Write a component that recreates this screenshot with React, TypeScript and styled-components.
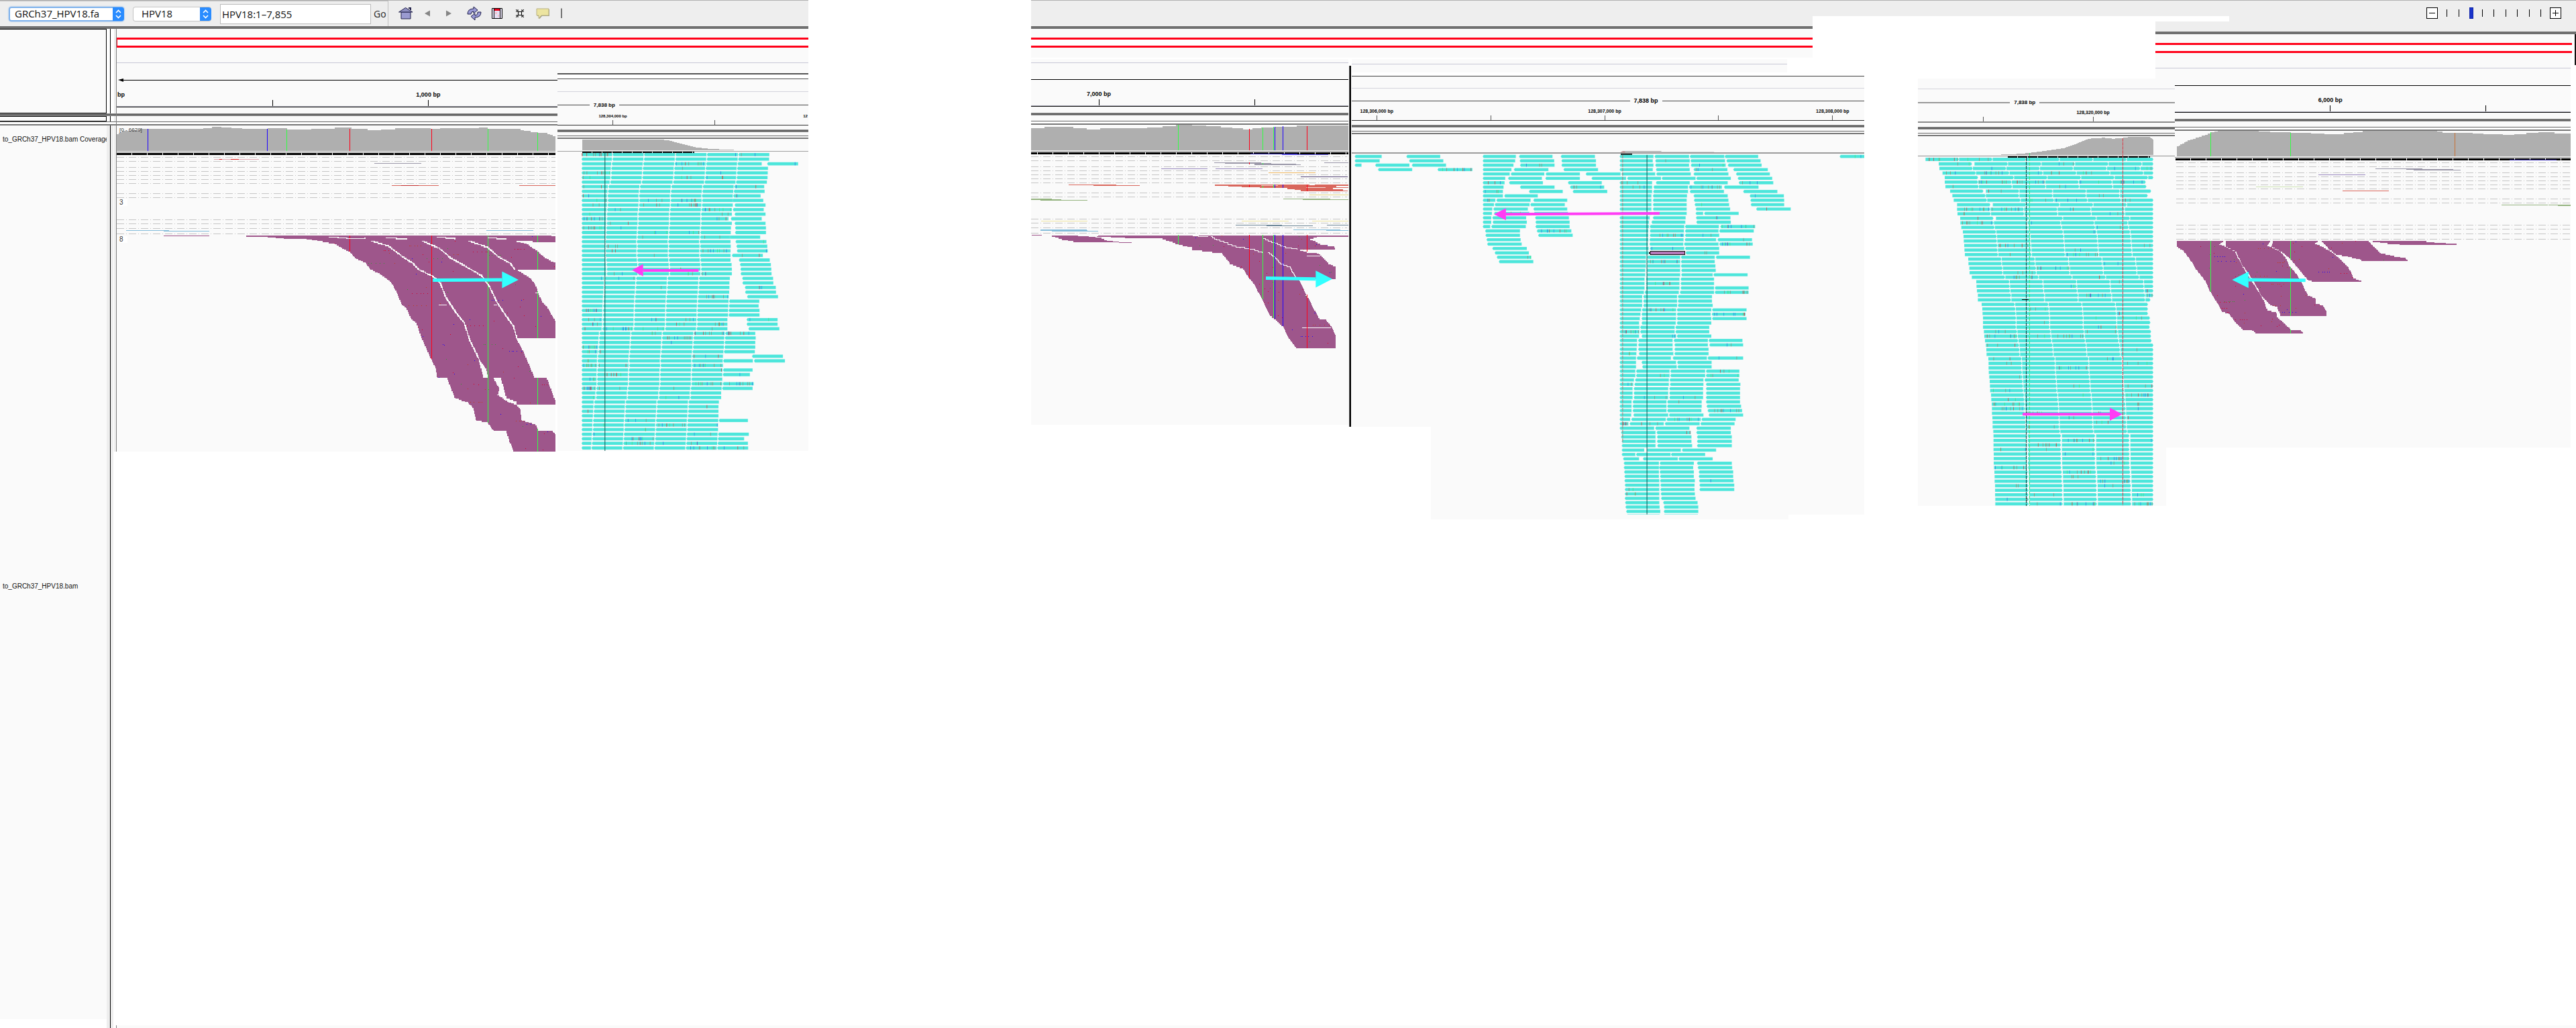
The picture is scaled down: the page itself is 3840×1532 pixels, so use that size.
import React from 'react';
import styled, { createGlobalStyle } from 'styled-components';

const PAPER = '#fafafa';
const CHROME = '#eeeeee';
const READ = '#4ce6db';
const PLUM = '#9e568b';
const RED = '#ff0018';
const LIME = '#33ff44';
const BLUE = '#1c00ff';
const GREY = '#afafaf';

const Global = createGlobalStyle`
  body { margin: 0; background: #fff; font-family: "Liberation Sans", Arial, sans-serif; color: #000; }
  *, *::before, *::after { box-sizing: border-box; }
`;

/* ---------- layout ---------- */

const Page = styled.main`
  display: flex;
  min-height: 100vh;
  background: #fff;
`;
const Col = styled.div<{ $grow: number }>`
  flex: ${p => p.$grow} 1 0;
  min-width: 0;
  display: flex;
  flex-direction: column;
`;
const Row = styled.div<{ $fill?: boolean }>`
  display: flex;
  align-items: ${p => (p.$fill ? 'stretch' : 'flex-start')};
  flex: ${p => (p.$fill ? '1' : 'none')};
`;
const Band = styled.div<{ $h: number; $c?: string }>`
  flex: none;
  height: ${p => p.$h}px;
  background: ${p => p.$c || PAPER};
`;
const Splitter = styled.div`
  flex: none;
  height: 4px;
  background: #636363;
  border: solid #8c8c8c;
  border-width: 1px 0;
`;
const Footer = styled.div<{ $tick?: boolean }>`
  margin-top: auto;
  height: 4px;
  background: ${PAPER};
  border-left: ${p => (p.$tick ? '1px solid #808080' : '0')};
`;
const LeftEdge = styled.div`
  border-left: 1px solid #808080;
`;
const Locus = styled.div<{ $start?: boolean }>`
  flex: none;
  height: 15px;
  background: #fff;
  border: 3px solid ${RED};
  border-right: 0;
  border-left-width: ${p => (p.$start ? 1 : 0)}px;
`;

/* ---------- toolbar ---------- */

const Toolbar = styled.header<{ $h: number; $open?: boolean }>`
  flex: none;
  height: ${p => p.$h}px;
  display: flex;
  align-items: flex-start;
  background: ${CHROME};
  border-top: 1px solid #b2b2b2;
  border-bottom: ${p => (p.$open ? '0' : '4px solid #707070')};
`;
const LocusTools = styled.form`
  display: flex;
  align-items: center;
  height: 38px;
  width: 579px;
  flex: none;
  padding-left: 13px;
  border-top: 1px solid #c0c0c0;
  border-right: 1px solid #c0c0c0;
`;
const SelectBox = styled.div<{ $w: number; $focus?: boolean }>`
  display: flex;
  position: relative;
  width: ${p => p.$w}px;
  height: 22px;
  margin-right: 13px;
  border-radius: 4px;
  background: #fff;
  box-shadow: ${p => (p.$focus ? 'inset 0 0 0 2px #7fb2ec, 0 0 2px #7fb2ec' : 'inset 0 0 0 1px #c4c4c4')};
  svg { position: absolute; right: 0; top: 1px; pointer-events: none; }
`;
const Select = styled.select<{ $pad: number }>`
  appearance: none;
  border: 0;
  outline: 0;
  background: transparent;
  width: 100%;
  padding: 0 18px 1px ${p => p.$pad}px;
  font: 15px "Open Sans", "Noto Sans", sans-serif;
  color: #111;
`;
const Search = styled.input`
  width: 225px;
  height: 30px;
  border: 1px solid #bdbdbd;
  background: #fff;
  padding: 0 0 0 2px;
  font: 15px "Open Sans", "Noto Sans", sans-serif;
  color: #111;
`;
const Go = styled.button`
  border: 0;
  background: none;
  padding: 0 0 0 4px;
  font: 14px "Open Sans", "Noto Sans", sans-serif;
  color: #222;
`;
const Tools = styled.nav`
  display: flex;
  align-items: center;
  height: 38px;
  padding-left: 15px;
  gap: 12px;
`;
const Tool = styled.button`
  width: 22px;
  height: 22px;
  padding: 0;
  border: 0;
  background: none;
  svg { display: block; }
`;
const Notch = styled.div`
  width: 110px;
  height: 8px;
  margin-top: 23px;
  background: #fff;
`;
const Zoom = styled.div`
  display: flex;
  align-items: center;
  margin: 10px 22px 0 auto;
  gap: 13px;
`;
const ZoomButton = styled.button`
  width: 17px;
  height: 17px;
  padding: 2px;
  border: 1px solid #000;
  background: #fff;
  svg { display: block; }
`;
const Scale = styled.div`
  display: flex;
  justify-content: space-between;
  align-items: center;
  position: relative;
  width: 141px;
  height: 17px;
`;
const Mark = styled.i`
  width: 1px;
  height: 11px;
  background: #000;
`;
const Range = styled.input`
  position: absolute;
  inset: 0;
  width: 100%;
  height: 17px;
  margin: 0;
  appearance: none;
  background: transparent;
  &::-webkit-slider-thumb {
    appearance: none;
    width: 6px;
    height: 17px;
    background: #1a34cc;
    border: 1px solid #1024a8;
  }
`;

/* ---------- name gutter ---------- */

const Gutter = styled.aside`
  flex: none;
  width: 173px;
  display: flex;
  flex-direction: column;
`;
const NameCell = styled.div<{ $h: number }>`
  width: 159px;
  height: ${p => p.$h}px;
  background: ${PAPER};
  border: 1px solid #000;
  border-left: 0;
`;
const Grip = styled.div<{ $c: string; $h?: number }>`
  width: 14px;
  display: flex;
  background: linear-gradient(to right, ${p => p.$c} 5px, #000 5px, #000 6px, ${p => p.$c} 6px, ${p => p.$c} 10px, transparent 10px);
`;
const GripPad = styled.div<{ $h: number }>`
  width: 3px;
  margin-left: auto;
  height: ${p => p.$h}px;
  background: ${CHROME};
`;
const Names = styled.div`
  width: 159px;
  display: flex;
  flex-direction: column;
  background: ${PAPER};
  margin-bottom: 13px;
  padding-left: 4px;
`;
const Name = styled.div<{ $h?: number }>`
  ${p => (p.$h ? `height: ${p.$h}px;` : 'flex: 1;')}
  display: flex;
  align-items: center;
  overflow: hidden;
  white-space: nowrap;
  font-size: 10px;
  color: #111;
`;

/* ---------- rulers ---------- */

const RulerRow = styled.div<{ $h: number; $clip?: boolean }>`
  flex: none;
  height: ${p => p.$h}px;
  display: flex;
  align-items: flex-end;
  background: ${PAPER};
  overflow: hidden;
`;
const Spacer = styled.div<{ $grow: number }>`
  flex: ${p => p.$grow} 1 0;
`;
const Tick = styled.div<{ $size: number; $gap: number; $tick: number; $c: string }>`
  width: 1px;
  display: flex;
  flex-direction: column;
  align-items: center;
  white-space: nowrap;
  font: bold ${p => p.$size}px/${p => p.$size}px "Liberation Sans", Arial, sans-serif;
  &::after {
    content: "";
    width: 1px;
    height: ${p => p.$tick}px;
    margin-top: ${p => p.$gap}px;
    background: ${p => p.$c};
  }
`;
const Span = styled.div<{ $size: number }>`
  flex: none;
  height: 13px;
  display: flex;
  align-items: center;
  background: ${PAPER};
  white-space: nowrap;
  font: bold ${p => p.$size}px/13px "Liberation Sans", Arial, sans-serif;
`;
const SpanLine = styled.div<{ $grow: number; $c: string; $h: number }>`
  flex: ${p => p.$grow} 1 0;
  height: ${p => p.$h}px;
  background: ${p => p.$c};
`;
const SpanText = styled.div`
  padding: 0 6px;
`;
const ArrowRow = styled.div`
  display: flex;
  align-items: center;
  height: 5px;
  background: ${PAPER};
  &::before { content: ""; border: solid transparent; border-width: 2px 8px 3px 0; border-right-color: #000; margin-left: 2px; }
  &::after { content: ""; flex: 1; height: 1px; background: #000; }
`;

type TickDef = { at: number; label?: string; plain?: boolean };
const Ruler = ({ from, to, h, size, gap, tick, ticks, color = '#000' }: {
  from: number; to: number; h: number; size: number; gap: number; tick: number; ticks: TickDef[]; color?: string;
}) => (
  <RulerRow $h={h}>
    {ticks.map((t, i) => (
      <React.Fragment key={t.at}>
        <Spacer $grow={t.at - (i ? ticks[i - 1].at : from)} />
        <Tick $size={size} $gap={gap} $tick={tick} $c={t.plain ? 'transparent' : color}>{t.label}</Tick>
      </React.Fragment>
    ))}
    <Spacer $grow={to - ticks[ticks.length - 1].at} />
  </RulerRow>
);
const SpanRow = ({ left, right, size, color, thick = 1 }: { left: number; right: number; size: number; color: string; thick?: number }) => (
  <Span $size={size}>
    <SpanLine $grow={left} $c={color} $h={thick} />
    <SpanText>7,838 bp</SpanText>
    <SpanLine $grow={right} $c={color} $h={thick} />
  </Span>
);
const Splits = ({ first, a, b }: { first: number; a: number; b: number }) => (
  <>
    <Band $h={first} />
    <Splitter />
    <Band $h={a} />
    <Band $h={1} $c="#666" />
    <Band $h={b} $c="#fff" />
    <Band $h={2} $c="#777" />
  </>
);

/* ---------- plots ---------- */

const Frame = styled.div`
  position: relative;
  flex: none;
`;
const Svg = styled.svg`
  display: block;
  width: 100%;
  shape-rendering: crispEdges;
  .px { vector-effect: non-scaling-stroke; fill: none; }
`;
const PlotNote = styled.span<{ $top: number; $plate?: boolean }>`
  position: absolute;
  left: 4px;
  top: ${p => p.$top}px;
  font-size: ${p => (p.$plate ? 10 : 8)}px;
  line-height: 10px;
  padding-right: ${p => (p.$plate ? 6 : 0)}px;
  background: ${p => (p.$plate ? '#fff' : 'transparent')};
  color: #333;
`;

type Unit = { x: number; y: number; sx: number; sy: number };
type Pt = [number, number];
const UnitCtx = React.createContext<Unit>({ x: 0, y: 0, sx: 1, sy: 1 });

const Plot = ({ unit, box, children }: { unit: Unit; box: [number, number, number, number]; children: React.ReactNode }) => {
  const [l, t, r, b] = box;
  const vb = [(l - unit.x) * unit.sx, (t - unit.y) * unit.sy, (r - l) * unit.sx, (b - t) * unit.sy].join(' ');
  return (
    <UnitCtx.Provider value={unit}>
      <Svg viewBox={vb} height={b - t} preserveAspectRatio="none">{children}</Svg>
    </UnitCtx.Provider>
  );
};

const rng = (seed: number) => () => {
  seed = (seed * 1664525 + 1013904223) % 4294967296;
  return seed / 4294967296;
};
const pts = (s: string): Pt[] => s.trim().split(/\s+/).map(p => p.split(',').map(Number) as Pt);
const jag = (s: string, close = true) => {
  const list = pts(s);
  if (close) list.push(list[0]);
  let d = `M${list[0][0]},${list[0][1]}`;
  for (let i = 1; i < list.length; i++) {
    const [ax, ay] = list[i - 1];
    const [bx, by] = list[i];
    const n = Math.max(1, Math.ceil(Math.min(Math.abs(bx - ax) / 3, Math.abs(by - ay) / 5)));
    for (let k = 1; k <= n; k++) {
      d += `H${(ax + ((bx - ax) * k) / n).toFixed(1)}V${(ay + ((by - ay) * k) / n).toFixed(1)}`;
    }
  }
  return d + (close ? 'Z' : '');
};

type VLine = [number, number, number, string];
const VLines = ({ lines, w = 1 }: { lines: VLine[]; w?: number }) => (
  <>{lines.map(([x, a, b, c]) => <path key={`${x}-${a}`} className="px" d={`M${x},${a}V${b}`} stroke={c} strokeWidth={w} />)}</>
);
type HLine = [number, number, number, string];
const HLines = ({ lines }: { lines: HLine[] }) => (
  <>{lines.map(([a, b, y, c], i) => <path key={i} className="px" d={`M${a},${y}H${b}`} stroke={c} strokeWidth={1} />)}</>
);
const Dashes = ({ from, to, ys }: { from: number; to: number; ys: number[] }) => (
  <>{ys.map(y => <path key={y} className="px" d={`M${from},${y}H${to}`} stroke="#c6c6c6" strokeWidth={1} strokeDasharray="11 3 1 3" />)}</>
);
const Blocks = ({ from, to, y, h = 3, offset = 0, on = 22 }: { from: number; to: number; y: number; h?: number; offset?: number; on?: number }) => (
  <path className="px" d={`M${from},${y}H${to}`} stroke="#000" strokeWidth={h} strokeDasharray={`${on} 1`} strokeDashoffset={offset} />
);
const Dots = ({ box, n, seed }: { box: [number, number, number, number]; n: number; seed: number }) => {
  const u = React.useContext(UnitCtx);
  const r = rng(seed);
  const colors = ['#e00020', '#1c00ff', '#2f9a2f', '#c03a20', '#d00030'];
  const out: React.ReactNode[] = [];
  for (let i = 0; i < n; i++) {
    let x = box[0] + r() * (box[2] - box[0]);
    const y = box[1] + r() * (box[3] - box[1]);
    const c = colors[Math.floor(r() * colors.length)];
    const run = r() < 0.15 ? 5 : 1;
    for (let k = 0; k < run; k++) {
      out.push(<rect key={`${i}-${k}`} x={x} y={y} width={u.sx} height={u.sy} fill={c} />);
      x += u.sx * (2 + Math.floor(r() * 6));
    }
  }
  return <>{out}</>;
};
const Arrow = ({ from, neck, tip, half, color, w }: { from: Pt; neck: Pt; tip: Pt; half: number; color: string; w: number }) => (
  <g shapeRendering="auto">
    <path className="px" d={`M${from}L${neck}`} stroke={color} strokeWidth={w} />
    <path d={`M${neck[0]},${tip[1] - half}L${tip}L${neck[0]},${tip[1] + half}Z`} fill={color} />
  </g>
);

type Seg = [number, number];
const Reads = ({ rows, y0, pitch, h, back, seed, rate }: {
  rows: Seg[][]; y0: number; pitch: number; h: number; back?: boolean; seed: number; rate: number;
}) => {
  const u = React.useContext(UnitCtx);
  const r = rng(seed);
  const tip = 1.5 * u.sx;
  const colors = ['#8b8b78', '#1e8ce8', '#3be87c', '#a08060', '#8b8b78', '#2a6ae8', '#d03a3a'];
  let d = '';
  const marks: React.ReactNode[] = [];
  rows.forEach((row, i) => {
    const y = y0 + i * pitch - h / 2;
    row.forEach(([a, b], j) => {
      d += back
        ? `M${a + tip},${y}H${b}V${y + h}H${a + tip}L${a},${y + h / 2}Z`
        : `M${a},${y}H${b - tip}L${b},${y + h / 2}L${b - tip},${y + h}H${a}Z`;
      if (r() < rate) {
        const n = r() < 0.3 ? 8 : 1 + Math.floor(r() * 3);
        for (let k = 0; k < n; k++) {
          const x = a + tip + r() * (b - a - 2 * tip);
          marks.push(<rect key={`${i}-${j}-${k}`} x={x} y={y} width={u.sx * 0.7} height={h} fill={colors[Math.floor(r() * colors.length)]} />);
        }
      }
    });
  });
  return <g shapeRendering="auto"><path d={d} fill={READ} stroke="#c9f6f2" strokeWidth={0.5} />{marks}</g>;
};

/* ---------- viral panel, 5' end ---------- */

const UA: Unit = { x: 160, y: 160, sx: 2.24, sy: 2.9585 };
const bodyA = `464,565 1470,565 1496,572 1496,1517 1358,1517 1345,1475 1333,1426 1290,1424 1270,1388 1232,1378 1222,1325 1205,1300
 1162,1280 1150,1240 1135,1192 1102,1190 1098,1150 1075,1090 1048,1010 1033,950 1015,930 1000,885 983,868 970,822 948,768 910,732
 878,712 862,682 830,665 810,637 760,600 700,585 665,579 590,576 535,570 464,568`;
const holesA = [
  '1366,590 1420,595 1496,598 1496,684 1460,660 1435,630 1400,600 1380,594',
  '1370,716 1496,716 1496,940 1470,880 1455,860 1440,820 1430,780 1412,750',
  '1366,1018 1496,1018 1496,1290 1485,1250 1468,1192 1428,1192 1405,1120 1388,1070',
  '1366,1310 1496,1310 1496,1440 1487,1426 1442,1426 1430,1395 1385,1378 1380,1330',
  '1290,1192 1312,1192 1332,1285 1366,1300 1366,1310 1340,1298 1302,1265 1308,1235',
  '1240,1110 1262,1150 1270,1192 1258,1192',
];
const cracksA = [
  '880,590 940,615 985,660 1020,690 1040,718 1085,745 1110,775 1130,840 1160,900 1190,950 1210,1030 1240,1110',
  '1050,590 1110,625 1145,665 1185,695 1250,745 1275,790 1300,860 1325,910 1355,965 1366,1018',
  '1205,590 1270,620 1305,660 1345,690 1360,716',
  '740,572 800,578 860,574', '930,576 1000,584', '1100,572 1160,582', '1270,576 1330,584', '1107,871 1133,871', '1290,871 1302,871', '1430,818 1442,818',
];
const PlotA = () => (
  <Plot unit={UA} box={[174, 187, 831, 673]}>
    <rect x={31} y={70} width={1480} height={1460} fill={PAPER} />
    <rect x={1496} y={200} width={16} height={1330} fill="#fff" />
    <path d={jag('31,192 31,118 50,105 110,96 230,95 320,92 350,87 380,88 450,94 535,93 600,97 760,90 870,100 960,93 1080,96 1110,91 1240,90 1270,95 1370,96 1390,105 1437,113 1470,118 1496,132 1496,192')} fill={GREY} />
    <VLines lines={[[135, 95, 192, BLUE], [534, 95, 192, BLUE], [598.5, 97, 192, LIME], [810, 95, 192, RED], [1083, 95, 192, RED], [1271, 95, 192, LIME], [1437, 113, 192, LIME]]} />
    <path className="px" d="M31,197H1496" stroke="#8c8c8c" />
    <Blocks from={31} to={1496} y={205} />
    <Dashes from={31} to={1496} ys={[220, 238, 264, 282, 300, 318, 335, 380, 397, 495, 513, 533, 557]} />
    <HLines lines={[
      [356, 506, 229, '#e3a9b4'], [375, 384, 229, '#e02020'], [412, 440, 229, '#e02020'], [892, 1048, 247, '#9a97a8'], [950, 1107, 344, '#d9665c'], [980, 1040, 344, '#c23030'],
      [1375, 1496, 344, '#d9665c'], [63, 206, 542, '#84bdda'], [188, 340, 545, '#84bdda'], [1266, 1422, 542, '#84bdda'], [188, 340, 566, PLUM],
    ]} />
    <clipPath id="clipA"><path d={jag(bodyA)} /></clipPath>
    <path d={jag(bodyA)} fill={PLUM} />
    <g clipPath="url(#clipA)"><Dots box={[600, 566, 1496, 1517]} n={190} seed={11} /></g>
    <VLines lines={[[810, 565, 637, RED], [1083, 565, 1110, RED], [1271, 565, 1390, LIME], [1437, 565, 1517, LIME]]} />
    {holesA.map(s => <path key={s} d={jag(s)} fill={PAPER} />)}
    {cracksA.map(s => <path key={s} className="px" d={jag(s, false)} stroke={PAPER} strokeWidth={1.5} />)}
    <Arrow from={[1087, 762]} neck={[1318, 760]} tip={[1373, 760]} half={37} color="#33ffff" w={5} />
  </Plot>
);

/* ---------- viral panel, 3' end ---------- */

const UC: Unit = { x: 1520, y: 0, sx: 3, sy: 2.3758 };
const bodyC = [
  '54,832 145,838 190,850 240,857 300,858 500,860 445,856 390,850 365,842 310,836 260,834',
  `340,833 1413,833 1470,836 1470,838 1290,838 1330,842 1300,850 1425,851 1310,853 1345,868 1408,876 1410,884 1240,884 1285,895
   1330,897 1350,910 1380,935 1413,948 1413,988 1240,988 1250,995 1285,1050 1325,1110 1340,1130 1370,1135 1395,1160 1413,1190 1413,1232
   1240,1232 1200,1190 1178,1155 1145,1130 1120,1115 1087,1060 1045,1000 1027,983 1000,950 940,930 905,895 770,882 770,875 710,864
   670,852 640,843 470,842 345,836`,
];
const PlotC = () => (
  <Plot unit={UC} box={[1537, 186, 2010, 633]}>
    <rect x={51} y={440} width={1420} height={1070} fill={PAPER} />
    <path d={jag('51,532 51,454 110,449 180,450 300,459 360,454 500,454 640,447 700,442 770,444 900,451 1000,458 1080,451 1140,448 1240,445 1470,444 1470,532')} fill={GREY} />
    <path className="px" d="M51,536H1470" stroke="#8c8c8c" />
    <Blocks from={51} to={1470} y={542} offset={13} />
    <Dashes from={51} to={1464} ys={[555, 569, 590, 604, 619, 632, 647, 683, 697, 775, 790, 806, 825]} />
    <HLines lines={[
      [1032, 1242, 545, '#2a20b0'], [1173, 1380, 547, '#6a60f0'], [870, 1080, 576, '#9a97a8'], [918, 1125, 578, '#9a97a8'], [1050, 1257, 583, '#9a97a8'], [1050, 1236, 581, '#9a97a8'], [1362, 1470, 577, '#9a97a8'],
      [633, 840, 597, '#9a8ac0'], [876, 1085, 597, '#9a8ac0'], [1113, 1323, 612, '#f0b860'], [1257, 1467, 626, '#5a4a78'],
      [219, 432, 654, '#d9665c'], [330, 537, 657, '#d9665c'], [1296, 1470, 690, '#e8d880'],
      [51, 144, 704, '#93b27e'], [51, 186, 706, '#93b27e'], [93, 303, 709, '#93b27e'], [1179, 1389, 704, '#93b27e'], [1266, 1470, 707, '#93b27e'],
      [96, 303, 783, '#efe6a0'], [993, 1203, 783, '#efe6a0'], [1308, 1470, 783, '#efe6a0'], [966, 1173, 797, '#6f8898'], [1104, 1311, 799, '#6f8898'], [1374, 1470, 797, '#6f8898'],
      [93, 300, 814, '#84bdda'], [93, 303, 816, '#84bdda'], [144, 351, 818, '#84bdda'], [1224, 1434, 814, '#84bdda'], [1371, 1470, 816, '#84bdda'],
    ]} />
    <path d="M873,653H1470V657H1416V664H1470V666H1400V669H1446V674H1467V678H1257V673H1230V669H1197V666H1075V664H993V661H933V658H873Z" fill="#d9665c" />
    <HLines lines={[[1080, 1156, 657, '#f2c8c4'], [1280, 1368, 664, '#f2d8d4'], [1296, 1320, 655, PAPER]]} />
    <clipPath id="clipC"><path d={jag(bodyC[0])} /><path d={jag(bodyC[1])} /></clipPath>
    {bodyC.map(s => <path key={s} d={jag(s)} fill={PLUM} />)}
    <g clipPath="url(#clipC)"><Dots box={[620, 832, 1413, 1232]} n={110} seed={5} /></g>
    {['855,838 880,850 930,865 985,880', '985,875 1050,888 1085,895', '1085,845 1140,862 1190,878 1240,884', '1110,895 1140,912 1165,935 1210,950 1235,985', '775,835 800,838 840,836', '300,836 350,837', '1263,1160 1392,1160', '1285,906 1345,906', '1285,891 1293,891', '1278,1046 1290,1046'].map(s => (
      <path key={s} className="px" d={jag(s, false)} stroke={PAPER} strokeWidth={1} />
    ))}
    <VLines lines={[
      [709.5, 442, 532, LIME], [709.5, 832, 865, LIME], [1027, 456, 532, RED], [1027, 576, 582, RED], [1027, 654, 662, RED], [1027, 832, 983, RED],
      [1087.5, 451, 532, LIME], [1087.5, 578, 583, LIME], [1087.5, 658, 665, LIME], [1087.5, 832, 1060, LIME], [1135.5, 450, 532, LIME], [1135.5, 654, 665, LIME], [1135.5, 832, 1127, LIME],
      [1141.5, 449, 532, BLUE], [1141.5, 654, 665, BLUE], [1141.5, 832, 1128, BLUE], [1177.5, 447, 532, BLUE], [1177.5, 654, 665, BLUE], [1177.5, 832, 1155, BLUE],
      [1285.5, 447, 532, RED], [1285.5, 654, 677, RED], [1285.5, 832, 892, RED], [1285.5, 1042, 1232, RED],
    ]} />
    <Arrow from={[1101, 985]} neck={[1324, 988]} tip={[1398, 988]} half={30} color="#33ffff" w={5} />
  </Plot>
);

/* ---------- viral panel, 6 kb ---------- */

const UF: Unit = { x: 3200, y: 0, sx: 2.45, sy: 3 };
const bodyF = [
  '110,1077 285,1077 265,1095 285,1103 320,1125 340,1170 360,1215 385,1262 405,1300 425,1340 440,1390 472,1400 475,1420 495,1440 525,1475 558,1477 572,1490 403,1490 385,1475 355,1475 325,1440 300,1400 275,1390 262,1360 234,1305 215,1255 180,1200 160,1160 135,1120 110,1100',
  '290,1077 455,1077 440,1100 485,1125 505,1150 520,1190 545,1225 565,1265 588,1322 615,1335 617,1360 645,1370 655,1390 657,1412 490,1412 478,1372 450,1360 420,1320 400,1275 378,1230 348,1180 328,1125 290,1100',
  '460,1077 630,1077 615,1092 640,1105 670,1125 705,1160 735,1195 755,1245 783,1259 613,1259 590,1250 575,1230 545,1185 520,1150 495,1125 455,1098',
  '640,1077 808,1077 825,1100 855,1135 905,1148 945,1158 953,1166 790,1166 780,1158 735,1145 690,1135 665,1110',
  '825,1077 995,1077 1050,1086 1133,1093 1133,1095 965,1095 880,1087',
];
const PlotF = () => (
  <Plot unit={UF} box={[3242, 195, 3832, 667]}>
    <rect x={100} y={580} width={1460} height={1430} fill={PAPER} />
    <path d={jag('110,699 110,655 150,628 190,612 234,592 260,585 370,585 450,592 526,593 600,596 650,599 720,594 790,585 1040,585 1080,593 1190,596 1230,601 1300,603 1430,591 1548,600 1548,699')} fill={GREY} />
    <VLines lines={[[234.5, 592, 699, LIME], [525.5, 594, 699, LIME], [1126, 594, 699, '#c87033']]} />
    <path className="px" d="M104,704H1548" stroke="#8c8c8c" />
    <Blocks from={105} to={1548} y={712.5} />
    <Dashes from={108} to={1548} ys={[727, 745, 772, 790, 808, 826, 844, 889, 907, 1006, 1024, 1045, 1069]} />
    <HLines lines={[
      [1325, 1497, 715, '#3a30b8'], [835, 1007, 754, '#9a97a8'], [948, 1120, 757, '#9a97a8'], [975, 1146, 760, '#9a97a8'], [627, 798, 781, '#9a8ac0'], [399, 571, 835, '#cfe3b4'],
      [715, 884, 853, '#d9665c'], [1296, 1465, 916, '#93b27e'], [1468, 1548, 916, '#93b27e'], [1502, 1548, 919, '#93b27e'],
    ]} />
    <clipPath id="clipF">{bodyF.map(s => <path key={s} d={jag(s)} />)}</clipPath>
    {bodyF.map(s => <path key={s} d={jag(s)} fill={PLUM} />)}
    <g clipPath="url(#clipF)">
      <Dots box={[120, 1077, 1000, 1490]} n={150} seed={23} />
      <VLines lines={[[234.5, 1077, 1305, LIME], [525.5, 1077, 1490, LIME]]} />
    </g>
    <Arrow from={[580, 1253]} neck={[372, 1251]} tip={[312, 1251]} half={37} color="#33ffff" w={5} />
  </Plot>
);

/* ---------- host panel, chr8:128,304,000 ---------- */

const UB: Unit = { x: 800, y: 80, sx: 3, sy: 2.6133 };
const firstB = [338, 337, 334, 332, 331, 330, 327, 319, 317, 315, 316, 315, 313, 311, 311, 311, 309, 308, 307, 305, 307, 306, 306, 308, 310, 311, 311, 302, 301, 300, 299, 297, 296, 295, 294, 294, 293, 293, 291, 279, 277, 276, 275, 273, 271, 270, 271, 269, 268, 268, 268, 265, 263, 263, 255, 254, 253, 252, 250, 249, 249, 247, 246, 245, 243, 242];
const endB = [1044, 1046, 1009, 1041, 1041, 1042, 1034, 1020, 1024, 1004, 1016, 1026, 1018, 1026, 1009, 1026, 1028, 1028, 1002, 1030, 1034, 1036, 1014, 1045, 1050, 1052, 1053, 1060, 1061, 1072, 1073, 1082, 998, 995, 999, 1000, 1080, 1080, 1088, 980, 986, 980, 986, 986, 1104, 1113, 837, 968, 956, 835, 973, 968, 827, 827, 817, 815, 815, 815, 947, 817, 820, 951, 930, 947, 950, 950];
const solidB: Record<number, number> = { 10: 882, 11: 882, 12: 875, 13: 875, 14: 860, 15: 878, 16: 871, 17: 870, 18: 870, 19: 870, 20: 870, 21: 869, 22: 869, 23: 869, 24: 878, 25: 878, 26: 878, 27: 866, 28: 864, 29: 866, 30: 863, 31: 861, 36: 855, 37: 855, 38: 855, 44: 837, 45: 969 };
const rowsB: Seg[][] = firstB.map((f, i) => {
  const stop = solidB[i] || endB[i];
  const row: Seg[] = [[201, f]];
  for (let x = f + 2; x < stop - 8; x += 141) row.push([x, Math.min(x + 139, stop)]);
  if (solidB[i]) row.push([endB[i] - 139, endB[i]]);
  if (i === 2) row.push([1033, 1172]);
  return row;
});
const PlotB = () => (
  <Plot unit={UB} box={[831, 207, 1206, 672]}>
    <rect x={93} y={300} width={1125} height={1247} fill={PAPER} />
    <path d="M205,334H540L590,337 640,349 715,365 780,371 885,375V377H205Z" fill={GREY} />
    <path className="px" d="M93,380H1218" stroke="#a0a0a0" strokeWidth={1.5} />
    <Blocks from={205} to={708} y={384} h={2} on={14} />
    <Reads rows={rowsB} y0={393} pitch={17.85} h={12.5} back seed={42} rate={0.3} />
    <VLines lines={[[204, 387, 399, '#d03a3a']]} />
    <path className="px" d="M306,386V1547" stroke="#0a5a54" strokeWidth={1} />
    <Arrow from={[726, 844]} neck={[477, 844]} tip={[427, 843]} half={24} color="#ff3cf5" w={4} />
  </Plot>
);

/* ---------- host panel, chr8:128,307,000 ---------- */

const UD: Unit = { x: 2000, y: 80, sx: 1.96, sy: 2.24 };
const rowsD: Seg[][] = `38-117 189-288 412-509 518-616 640-740 812-911 914-1015 1017-1118 1119-1217 1455-1531
38-111 197-297 412-507 520-621 642-743 812-909 916-1017 1019-1120 1124-1224
38-58 98-198 205-305 412-502 521-622 642-743 812-911 916-1015 1020-1122 1128-1227
106-206 280-382 412-496 503-604 648-749 812-909 918-1017 1028-1127 1144-1245
412-491 494-592 596-696 713-815 817-916 919-1020 1028-1130 1152-1251
412-478 486-585 595-696 730-831 834-933 935-1034 1036-1137 1157-1258
412-476 489-588 661-760 812-907 918-1017 1028-1128 1160-1261
412-473 521-622 667-767 812-907 911-1012 1014-1111 1117-1218
412-471 547-646 675-776 812-907 910-1012 1017-1117 1173-1273
412-471 475-573 812-905 909-1009 1028-1128 1192-1292
412-449 452-552 560-659 812-905 909-1008 1029-1130 1194-1293
412-445 447-549 551-652 812-905 909-1008 1031-1132 1195-1293
412-440 443-544 560-659 812-905 909-1008 1034-1135 1211-1312
412-439 445-548 561-661 812-905 909-1008 1034-1056 1059-1160
412-437 440-539 565-664 812-900 909-1005 1035-1136
412-437 441-541 566-666 812-898 905-1004 1036-1137
412-434 437-538 566-666 812-898 900-1001 1003-1102 1106-1208
419-521 570-671 812-896 900-1000 1003-1101 1103-1204
420-521 574-675 812-896 900-1000 1003-1103
423-523 812-896 899-999 1002-1094 1098-1199
425-526 812-895 899-998 1000-1101 1103-1201
440-541 812-897 900-1001 1003-1103
447-547 812-897 1005-1103
453-554 812-889 892-989 991-1090 1093-1193
459-560 812-889 892-989 991-1090
812-889 892-989 991-1092
812-887 891-989 992-1093
812-887 891-989 992-1084 1086-1186
812-885 889-987 990-1088
812-885 889-987 990-1088
812-885 889-987 990-1088 1090-1189
812-883 885-985 988-1088 1090-1189
812-878 881-980 982-1082
812-878 881-980 982-1082
812-878 881-980 982-1084
812-875 877-977 979-1080 1082-1183
812-873 876-977 979-1078 1081-1180
812-871 876-977 979-1080 1082-1183
812-869 876-976 979-1080
812-870 872-973 975-1074
812-870 872-973 975-1074
812-869 876-977 979-1080
812-863 866-967 970-1070 1072-1171
812-863 866-967 972-1070 1074-1173
812-862 866-967 972-1072
812-861 868-969 972-1072
812-860 862-962 967-1067 1069-1173
812-860 876-977 980-1081
812-860 878-979 981-1081
812-858 860-958 960-1062 1064-1162
812-858 860-958 960-1062 1064-1162
812-854 857-956 958-1057 1060-1160
812-852 855-956 959-1057 1064-1165
812-850 853-954 957-1056 1064-1164
812-850 853-954 957-1056 1064-1164
812-850 853-954 957-1056 1064-1164
812-847 850-949 951-1052 1064-1164
812-847 850-949 951-1052 1066-1167
812-847 850-949 951-1051 1069-1170
812-846 852-954 956-1057 1072-1173
812-843 846-947 949-1049 1051-1151
812-838 841-941 944-1046 1048-1148
812-913 916-1016 1036-1137
816-917 920-1020 1036-1137
816-917 921-1022 1038-1140
818-917 921-1022 1038-1140
818-917 922-1024 1038-1140
818-884 891-991 994-1094
818-858 860-961 962-1062
822-869 880-982 984-1084
824-927 929-1029 1038-1140
824-927 927-1027 1040-1141
825-927 929-1029 1043-1144
826-927 930-1029 1043-1144
826-928 930-1032 1044-1145
827-928 931-1031 1045-1147
827-928 931-1031 1045-1147
827-928 932-1032
827-928 933-1034
828-928 939-1040
829-929 941-1042
831-931 941-1042`.split('\n').map(l => l.trim().split(' ').map(s => s.split('-').map(Number) as Seg));
const PlotD = () => (
  <Plot unit={UD} box={[2015, 200, 2779, 774]}>
    <rect x={29} y={262} width={1500} height={984} fill={PAPER} />
    <rect x={261} y={1240} width={1268} height={299} fill={PAPER} />
    <rect x={261} y={1500} width={1044} height={60} fill={PAPER} />
    <HLines lines={[[820, 934, 326, '#a8a8a8'], [820, 1088, 329, '#b8b8b8'], [816, 828, 328, '#d08080']]} />
    <path className="px" d="M29,332H1529" stroke="#9c9c9c" strokeWidth={1.5} />
    <path className="px" d="M815,336H848" stroke="#000" strokeWidth={2} />
    <Reads rows={rowsD} y0={343} pitch={14.63} h={10.4} back seed={77} rate={0.16} />
    <path d="M834,1538H930M942,1538H1040" stroke={READ} />
    <path className="px" d="M821,338V1300" stroke="#b07a74" strokeWidth={1} strokeDasharray="5 1.5" />
    <path className="px" d="M892,338V1538" stroke="#0a5a54" strokeWidth={1} />
    <path d="M903,660H1003V671H903L899,665.5Z" fill="#b478b8" stroke="#111" strokeWidth={2.5} />
    <Arrow from={[929, 533]} neck={[480, 536]} tip={[445, 536]} half={20} color="#ff3cf5" w={4} />
  </Plot>
);

/* ---------- host panel, chr8:128,320,000 ---------- */

const UE: Unit = { x: 2840, y: 80, sx: 3, sy: 2.2725 };
const leftE = [91, 150, 153, 167, 177, 177, 180, 201, 211, 217, 232, 232, 234, 246, 247, 251, 258, 261, 262, 264, 265, 267, 282, 283, 287, 288, 298, 318, 319, 321, 325, 325, 342, 345, 346, 348, 348, 348, 352, 354, 357, 361, 363, 364, 372, 373, 373, 374, 376, 378, 379, 380, 384, 385, 387, 388, 388, 390, 391, 391, 394, 395, 395, 395, 395, 396, 396, 396, 397, 399, 400, 400, 402, 402, 402, 403, 403];
const endE: Record<number, number> = { 5: 1082, 6: 1084, 7: 1100, 8: 1085, 31: 1097, 32: 1086, 33: 1086, 34: 1086, 35: 1095, 36: 1097, 37: 1094, 38: 1100, 39: 1100, 40: 1102 };
const rowsE: Seg[][] = leftE.map((l, i) => {
  const stop = endE[i] || 1110;
  const row: Seg[] = [];
  const step = i > 60 ? 153 : 150;
  for (let x = l, k = 0; x < stop - 12; k++) {
    const e = Math.min(x + (k === 0 && i > 60 ? 150 : 149), stop);
    row.push([x, e]);
    x += step;
    if (k === 0 && i >= 1 && i <= 15 && i % 3 === 1) x += 10;
  }
  return row;
});
const PlotE = () => (
  <Plot unit={UE} box={[2859, 204, 3242, 755]}>
    <rect x={57} y={270} width={1149} height={1064} fill={PAPER} />
    <rect x={57} y={1330} width={1109} height={202} fill={PAPER} />
    <path d="M402,343L520,339 600,332 710,320 760,307 810,291 840,286 890,285 930,288 980,285 1020,280 1085,278 1109,290V344H402Z" fill={GREY} />
    <path className="px" d="M57,346H1206" stroke="#8c8c8c" strokeWidth={1.5} />
    <Blocks from={460} to={1094} y={351} h={2} on={14} />
    <Reads rows={rowsE} y0={358} pitch={15.35} h={11} seed={9} rate={0.26} />
    <path className="px" d="M556,336V1532" stroke="#3be87c" strokeWidth={1} strokeDasharray="5 2" />
    <path className="px" d="M541,352V1532" stroke="#143c3a" strokeWidth={1} strokeDasharray="5 1" />
    <path className="px" d="M973,286V1530" stroke="#d8404c" strokeWidth={1} strokeDasharray="5 1" />
    <path className="px" d="M522,833H552" stroke="#000" strokeWidth={1} />
    <Arrow from={[525, 1221]} neck={[915, 1221]} tip={[971, 1221]} half={22} color="#ff3cf5" w={4} />
  </Plot>
);

/* ---------- icons ---------- */

const Caret = () => (
  <svg width="17" height="20" viewBox="0 0 17 20" aria-hidden>
    <path d="M0 0H13Q17 0 17 4V16Q17 20 13 20H0Z" fill="#2a8cff" />
    <path d="M5 8L8.500 4.500L12 8M5 12L8.500 15.500L12 12" fill="none" stroke="#fff" strokeWidth="1.6" />
  </svg>
);
const icons: { label: string; art: React.ReactNode }[] = [
  { label: 'Home', art: <><path d="M4 9H18V19H4Z" fill="#9a9ad0" stroke="#22224a" /><path d="M.5 9L10.500 2.500L21 9Z" fill="#8e8ec0" stroke="#22224a" /><path d="M15 3H18V6" fill="none" stroke="#22224a" strokeWidth="2" /></> },
  { label: 'Back', art: <path d="M13 6.500V15.500L5 11Z" fill="#858585" /> },
  { label: 'Forward', art: <path d="M3 6.500V15.500L11 11Z" fill="#858585" /> },
  { label: 'Refresh', art: <g fill="#9a9ad6" stroke="#1c1c48" strokeWidth="1"><path d="M1 12Q1 4 10 4V1L16 6L10 11V8Q6 8 6 12Z" /><path d="M21 9Q21 17 12 17V21L6 15.500L12 11V14Q16 14 16 9Z" /></g> },
  { label: 'Region', art: <><path d="M3.500 3.500H18.500V18.500H3.500Z" fill="#e6e0f4" stroke="#000" /><path d="M6.500 3V19M15.500 3V19" stroke="#000" /><path d="M7 4H15V7H7Z" fill="#e8001c" /><path d="M8 9H11V12H8ZM12 13H14V16H12Z" fill="#f4c4cc" /></> },
  { label: 'Shrink', art: <g stroke="#000" fill="none"><path d="M8.500 8.500H13.500V13.500H8.500Z" /><path d="M5 5L8.500 8.500M17 5L13.500 8.500M5 17L8.500 13.500M17 17L13.500 13.500M5 8H8V5M17 8H14V5M5 14H8V17M17 14H14V17" /></g> },
  { label: 'Details', art: <><path d="M3 5H21V15H10L6 19.500V15H3Z" fill="#a0a090" /><path d="M2 4H20V14H9L5 18.500V14H2Z" fill="#ece4a0" stroke="#b8b080" /></> },
  { label: 'Ruler', art: <path d="M5 3.500V18" stroke="#777" strokeWidth="2" /> },
];

const LeftWindow = () => (
  <Col $grow={1205}>
    <Toolbar $h={43}>
      <LocusTools onSubmit={e => e.preventDefault()}>
        <SelectBox $w={172} $focus>
          <Select $pad={9} aria-label="Genome"><option>GRCh37_HPV18.fa</option></Select>
          <Caret />
        </SelectBox>
        <SelectBox $w={117}>
          <Select $pad={13} aria-label="Chromosome"><option>HPV18</option></Select>
          <Caret />
        </SelectBox>
        <Search aria-label="Locus" defaultValue="HPV18:1–7,855" />
        <Go type="submit">Go</Go>
      </LocusTools>
      <Tools>
        {icons.map(i => (
          <Tool key={i.label} type="button" aria-label={i.label}>
            <svg width="22" height="22" viewBox="0 0 22 22">{i.art}</svg>
          </Tool>
        ))}
      </Tools>
    </Toolbar>
    <Row $fill>
      <Gutter>
        <Row><NameCell $h={126} /><Grip $c="#fff"><GripPad $h={126} /></Grip></Row>
        <Splitter />
        <Row><NameCell $h={8} /><Grip $c="#fff"><GripPad $h={8} /></Grip></Row>
        <Band $h={1} $c="#666" />
        <Band $h={3} $c="#fff" />
        <Band $h={2} $c="#777" />
        <Row $fill>
          <Names>
            <Name $h={40}>to_GRCh37_HPV18.bam Coverage</Name>
            <Name>to_GRCh37_HPV18.bam</Name>
          </Names>
          <Grip $c={CHROME}><GripPad $h={486} /></Grip>
        </Row>
      </Gutter>
      <Col $grow={1}>
        <LeftEdge>
          <Band $h={13} />
          <Locus $start />
          <Band $h={22} />
          <Band $h={1} $c="#c8c8d6" />
          <Band $h={13} />
        </LeftEdge>
        <Row>
          <Col $grow={658}>
            <LeftEdge>
              <Band $h={10} />
              <ArrowRow />
              <Ruler from={174} to={831} h={36} size={9} gap={3} tick={9} ticks={[{ at: 180, label: 'bp', plain: true }, { at: 406 }, { at: 638, label: '1,000 bp' }]} />
              <Band $h={1} $c="#b8b8c4" />
              <Band $h={1} $c="#000" />
              <Splits first={9} a={8} b={3} />
              <Frame>
                <PlotA />
                <PlotNote $top={2}>[0 - 6629]</PlotNote>
                <PlotNote $top={110} $plate>3</PlotNote>
                <PlotNote $top={165} $plate>8</PlotNote>
              </Frame>
            </LeftEdge>
          </Col>
          <Col $grow={374}>
            <Band $h={2} />
            <Band $h={2} $c="#555" />
            <Band $h={6} $c="#fff" />
            <Band $h={1} $c="#555" />
            <Band $h={18} />
            <Band $h={1} $c="#d4d4dc" />
            <Band $h={13} />
            <SpanRow left={48} right={283} size={8} color="#444" />
            <Ruler from={831} to={1206} h={23} size={6} gap={3} tick={7} color="#555" ticks={[{ at: 914, label: '128,304,000 bp' }, { at: 1067 }, { at: 1202, label: '12', plain: true }]} />
            <Band $h={1} $c="#333" />
            <Splits first={6} a={5} b={2} />
            <PlotB />
          </Col>
        </Row>
        <Footer $tick />
      </Col>
    </Row>
  </Col>
);

const GapColumn = styled(Col)`
  justify-content: flex-end;
`;
const BarColumn = styled.div`
  width: 5px;
  flex: none;
  padding: 10px 1px 0;
  &::before { content: ""; display: block; height: 538px; background: #000; border-left: 1px solid #555; }
`;
const Remnant = styled.div`
  width: 85%;
`;
const SideTab = styled.div`
  width: 29px;
  margin-left: auto;
`;
const Inset = styled.div`
  padding-right: 8px;
`;
const Edge = styled.div`
  width: 6px;
  flex: none;
  height: 46px;
  margin-bottom: -9px;
  border-right: 2px solid #111;
`;
const Grow = styled.div`
  flex: 1;
`;

const RightWindow = () => (
  <Col $grow={2303}>
    <Row>
      <Col $grow={1165}>
        <Toolbar $h={43} />
        <Band $h={13} />
        <Locus />
        <Band $h={15} />
        <Band $h={2} $c="#fff" />
      </Col>
      <Col $grow={511}>
        <Toolbar $h={24} $open />
      </Col>
      <Col $grow={627}>
        <Toolbar $h={51}>
          <Notch />
          <Zoom>
            <ZoomButton type="button" aria-label="Zoom out"><svg width="11" height="11"><path d="M1 5.500H10" stroke="#000" /></svg></ZoomButton>
            <Scale>
              {Array.from({ length: 9 }, (_, i) => <Mark key={i} />)}
              <Range type="range" min={0} max={8} defaultValue={2} aria-label="Zoom level" />
            </Scale>
            <ZoomButton type="button" aria-label="Zoom in"><svg width="11" height="11"><path d="M1 5.500H10M5.500 1V10" stroke="#000" /></svg></ZoomButton>
          </Zoom>
        </Toolbar>
        <Row>
          <Grow>
            <Band $h={13} />
            <Locus />
            <Band $h={9} />
          </Grow>
          <Edge />
        </Row>
      </Col>
    </Row>
    <Row>
      <Col $grow={473}>
        <Band $h={5} />
        <Band $h={1} $c="#c8c8d6" />
        <Band $h={24} />
        <Band $h={1} $c="#000" />
        <Ruler from={1537} to={2010} h={38} size={9} gap={3} tick={9} ticks={[{ at: 1638, label: '7,000 bp' }, { at: 1870 }]} />
        <Band $h={1} $c="#b8b8c4" />
        <Band $h={1} $c="#000" />
        <Splits first={9} a={8} b={3} />
        <PlotC />
      </Col>
      <BarColumn />
      <Col $grow={764}>
        <Remnant>
          <Band $h={7} />
          <Band $h={1} $c="#c8c8d6" />
          <Band $h={12} />
        </Remnant>
        <Band $h={5} $c="#fff" />
        <Band $h={1} $c="#444" />
        <Band $h={17} />
        <Band $h={1} $c="#d4d4dc" />
        <Band $h={12} />
        <SpanRow left={414} right={301} size={9} color="#444" />
        <Ruler from={2015} to={2779} h={22} size={7} gap={3} tick={7} color="#555" ticks={[{ at: 2052, label: '128,306,000 bp' }, { at: 2222 }, { at: 2392, label: '128,307,000 bp' }, { at: 2562 }, { at: 2732, label: '128,308,000 bp' }]} />
        <Band $h={1} $c="#333" />
        <Splits first={6} a={5} b={2} />
        <PlotD />
      </Col>
      <Col $grow={80} />
      <Col $grow={383}>
        <SideTab>
          <Band $h={13} />
          <Band $h={1} $c="#c8c8d6" />
          <Band $h={15} />
        </SideTab>
        <Band $h={15} />
        <Band $h={1} $c="#d4d4dc" />
        <Band $h={13} />
        <SpanRow left={136} right={200} size={8} color="#999" thick={2} />
        <Ruler from={2859} to={3242} h={22} size={7} gap={3} tick={7} color="#555" ticks={[{ at: 2956 }, { at: 3120, label: '128,320,000 bp' }]} />
        <Band $h={2} $c="#8a8a8a" />
        <Splits first={6} a={5} b={2} />
        <Band $h={1} />
        <PlotE />
      </Col>
      <Col $grow={598}>
        <Inset>
          <Band $h={13} />
          <Band $h={1} $c="#c8c8d6" />
          <Band $h={25} />
          <Band $h={1} $c="#000" />
          <Ruler from={3242} to={3832} h={38} size={9} gap={3} tick={9} ticks={[{ at: 3474, label: '6,000 bp' }, { at: 3706 }]} />
          <Band $h={1} $c="#b8b8c4" />
          <Band $h={1} $c="#000" />
          <Splits first={9} a={8} b={3} />
          <PlotF />
        </Inset>
      </Col>
    </Row>
    <Footer />
  </Col>
);

export default function App() {
  return (
    <>
      <Global />
      <Page>
        <LeftWindow />
        <GapColumn $grow={332}><Footer /></GapColumn>
        <RightWindow />
      </Page>
    </>
  );
}
